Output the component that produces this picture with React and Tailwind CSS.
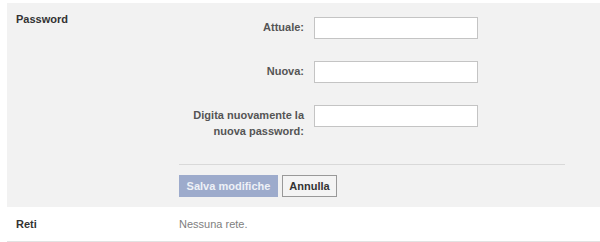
import React from "react";

function Row({ label, last }) {
  return (
    <div className={`flex items-start ${last ? "" : "mb-[22px]"}`}>
      <div className="w-[135px] pr-[10px] pt-[2px] text-right font-bold text-[11px] leading-[16px] text-[#555]">
        {label}
      </div>
      <div className="h-[22px] w-[164px] border border-[#c4c4c4] bg-white" />
    </div>
  );
}

export default function App() {
  return (
    <div
      className="w-[600px] h-[242px] bg-white overflow-hidden"
      style={{ fontFamily: '"Liberation Sans", Arial, sans-serif' }}
    >
      <div className="ml-[7px] mt-[3px] h-[204px] bg-[#f2f2f2] flex">
        <div className="w-[172px] pl-[9px] pt-[9px] text-[11px] leading-[14px] font-bold text-[#333]">
          Password
        </div>
        <div className="pt-[14px]">
          <div>
            <Row label="Attuale:" />
            <Row label="Nuova:" />
            <Row label={<>Digita nuovamente la<br />nuova password:</>} last />
          </div>
          <div className="mt-[25px] h-px w-[386px] bg-[#d9d9d9]" />
          <div className="mt-[10px] flex gap-[4px]">
            <button className="h-[22px] w-[99px] bg-[#9dabcc] border border-[#9dabcc] text-[11px] font-bold text-[#eef1f7] leading-[20px]">
              Salva modifiche
            </button>
            <button className="h-[22px] w-[55px] bg-[#f4f4f4] border border-[#999] text-[11px] font-bold text-[#333] leading-[20px]">
              Annulla
            </button>
          </div>
        </div>
      </div>
      <div className="ml-[7px] h-[35px] border-b border-[#e2e2e2] flex">
        <div className="w-[172px] pl-[9px] pt-[10px] text-[11px] leading-[14px] font-bold text-[#333]">
          Reti
        </div>
        <div className="pt-[10px] text-[11px] leading-[14px] text-[#808080]">
          Nessuna rete.
        </div>
      </div>
    </div>
  );
}
